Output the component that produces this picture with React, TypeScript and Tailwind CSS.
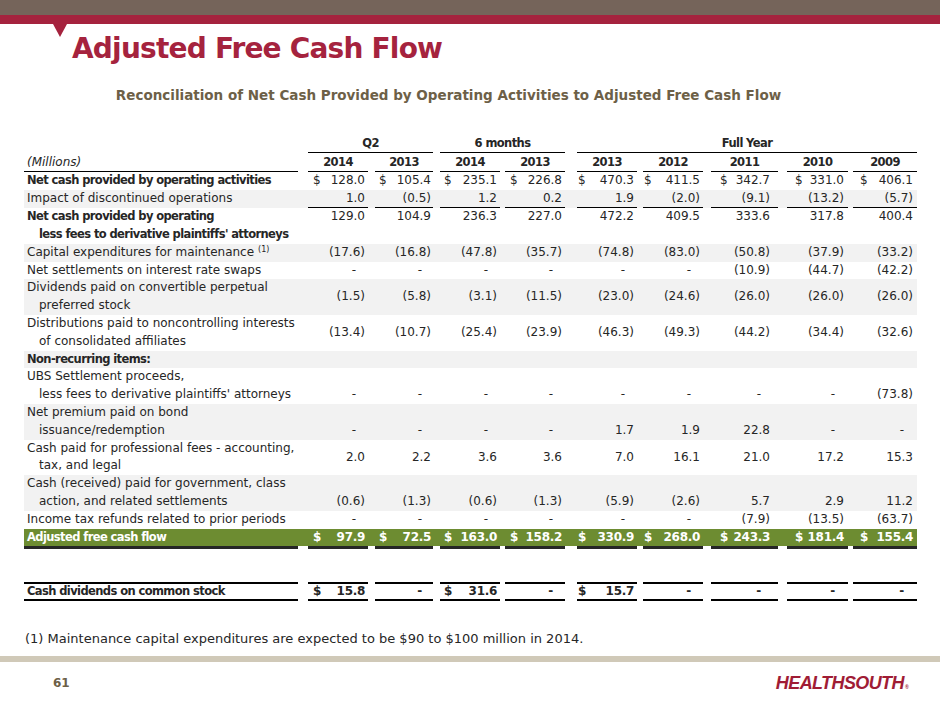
import React from "react";

type Align = "center" | "end";

type Line = {
  label: string[];
  vals?: string[];
  bold?: boolean;
  gray?: boolean;
  align?: Align;
  underline?: boolean;
  indent?: boolean;
  note?: boolean;
};

// column boxes line up with the underlines in the reference
const COLS = [
  { box: "ml-[10px] w-[60px]", pl: "pl-[5px]", pr: "pr-[3px]" },
  { box: "ml-[7px] w-[58px]", pl: "pl-[4px]", pr: "pr-[2px]" },
  { box: "ml-[7px] w-[60px]", pl: "pl-[4px]", pr: "pr-[3px]" },
  { box: "ml-[5px] w-[60px]", pl: "pl-[5px]", pr: "pr-[3px]" },
  { box: "ml-[12px] w-[60px]", pl: "pl-[1px]", pr: "pr-[3px]" },
  { box: "ml-[6px] w-[60px]", pl: "pl-[1px]", pr: "pr-[3px]" },
  { box: "ml-[8px] w-[67px]", pl: "pl-[9px]", pr: "pr-[8px]" },
  { box: "ml-[9px] w-[61px]", pl: "pl-[8px]", pr: "pr-[4px]" },
  { box: "ml-[5px] w-[64px]", pl: "pl-[7px]", pr: "pr-[4px]" },
];

const YEARS = ["2014", "2013", "2014", "2013", "2013", "2012", "2011", "2010", "2009"];

const ROWS: Line[] = [
  {
    label: ["Net cash provided by operating activities"],
    bold: true,
    vals: ["$128.0", "$105.4", "$235.1", "$226.8", "$470.3", "$411.5", "$342.7", "$331.0", "$406.1"],
  },
  {
    label: ["Impact of discontinued operations"],
    gray: true,
    underline: true,
    vals: ["1.0", "(0.5)", "1.2", "0.2", "1.9", "(2.0)", "(9.1)", "(13.2)", "(5.7)"],
  },
  {
    label: ["Net cash provided by operating"],
    bold: true,
    vals: ["129.0", "104.9", "236.3", "227.0", "472.2", "409.5", "333.6", "317.8", "400.4"],
  },
  { label: ["less fees to derivative plaintiffs' attorneys"], bold: true, indent: true },
  {
    label: ["Capital expenditures for maintenance"],
    note: true,
    gray: true,
    vals: ["(17.6)", "(16.8)", "(47.8)", "(35.7)", "(74.8)", "(83.0)", "(50.8)", "(37.9)", "(33.2)"],
  },
  {
    label: ["Net settlements on interest rate swaps"],
    vals: ["-", "-", "-", "-", "-", "-", "(10.9)", "(44.7)", "(42.2)"],
  },
  {
    label: ["Dividends paid on convertible perpetual", "preferred stock"],
    gray: true,
    vals: ["(1.5)", "(5.8)", "(3.1)", "(11.5)", "(23.0)", "(24.6)", "(26.0)", "(26.0)", "(26.0)"],
  },
  {
    label: ["Distributions paid to noncontrolling interests", "of consolidated affiliates"],
    vals: ["(13.4)", "(10.7)", "(25.4)", "(23.9)", "(46.3)", "(49.3)", "(44.2)", "(34.4)", "(32.6)"],
  },
  { label: ["Non-recurring items:"], bold: true, gray: true },
  {
    label: ["UBS Settlement proceeds,", "less fees to derivative plaintiffs' attorneys"],
    align: "end",
    vals: ["-", "-", "-", "-", "-", "-", "-", "-", "(73.8)"],
  },
  {
    label: ["Net premium paid on bond", "issuance/redemption"],
    gray: true,
    align: "end",
    vals: ["-", "-", "-", "-", "1.7", "1.9", "22.8", "-", "-"],
  },
  {
    label: ["Cash paid for professional fees - accounting,", "tax, and legal"],
    vals: ["2.0", "2.2", "3.6", "3.6", "7.0", "16.1", "21.0", "17.2", "15.3"],
  },
  {
    label: ["Cash (received) paid for government, class", "action, and related settlements"],
    gray: true,
    align: "end",
    vals: ["(0.6)", "(1.3)", "(0.6)", "(1.3)", "(5.9)", "(2.6)", "5.7", "2.9", "11.2"],
  },
  {
    label: ["Income tax refunds related to prior periods"],
    vals: ["-", "-", "-", "-", "-", "-", "(7.9)", "(13.5)", "(63.7)"],
  },
];

const ADJUSTED = ["$97.9", "$72.5", "$163.0", "$158.2", "$330.9", "$268.0", "$243.3", "$181.4", "$155.4"];
const DIVIDENDS = ["$15.8", "-", "$31.6", "-", "$15.7", "-", "-", "-", "-"];

const BOLD = "font-bold text-[11.5px] tracking-[-0.6px]";

function Value({ v, i, extra }: { v: string; i: number; extra?: string }) {
  const c = COLS[i];
  const dollar = v.startsWith("$");
  const num = dollar ? v.slice(1) : v;
  return (
    <div className={`${c.box} flex justify-between ${extra ?? ""}`}>
      <span className={c.pl}>{dollar ? "$" : ""}</span>
      <span className={`${c.pr} ${num === "-" ? "mr-[9px]" : ""}`}>{num}</span>
    </div>
  );
}

function Row({ r }: { r: Line }) {
  return (
    <div className={`flex leading-[17.8px] ${r.gray ? "bg-[#f2f2f2]" : ""}`}>
      <div
        className={`w-[274px] whitespace-nowrap ${r.indent ? "pl-[15px]" : "pl-[3px]"} ${
          r.bold ? BOLD : ""
        }`}
      >
        {r.label.map((t, k) => (
          <div key={k} className={`h-[17.8px] ${k > 0 ? "pl-[12px]" : ""}`}>
            {t}
            {r.note && (
              <sup className="text-[8px] leading-none ml-[4px]">(1)</sup>
            )}
          </div>
        ))}
      </div>
      {r.vals?.map((v, i) => (
        <Value
          key={i}
          v={v}
          i={i}
          extra={`${r.align === "end" ? "items-end" : "items-center"} ${
            r.underline ? "border-b border-black" : ""
          }`}
        />
      ))}
    </div>
  );
}

export default function App() {
  return (
    <div className="relative w-[940px] h-[705px] overflow-hidden bg-white flex flex-col font-['DejaVu_Sans',sans-serif] text-[#262626]">
      <div className="h-[15px] bg-[#75645a]" />
      <div className="h-[9px] bg-[#a5233e]" />
      <div className="absolute left-[53px] top-[24px] w-0 h-0 border-l-[7px] border-r-[7px] border-t-[13px] border-l-transparent border-r-transparent border-t-[#a5233e]" />

      <h1 className="ml-[72px] mt-[11px] h-[28px] leading-[28px] text-[28px] font-bold tracking-[-0.8px] text-[#a5233e]">
        Adjusted Free Cash Flow
      </h1>

      <p className="w-[897px] mt-[26px] text-center leading-[13px] text-[13.5px] font-bold text-[#6d6047]">
        Reconciliation of Net Cash Provided by Operating Activities to Adjusted Free Cash Flow
      </p>

      <div className="ml-[24px] mt-[32px] w-[893px] text-[12px]">
        {/* group headings */}
        <div className={`flex leading-[18px] ${BOLD}`}>
          <div className="w-[274px]" />
          <div className="ml-[10px] w-[125px] text-center border-b border-black">Q2</div>
          <div className="ml-[7px] w-[125px] text-center border-b border-black">6 months</div>
          <div className="ml-[12px] w-[340px] text-center border-b border-black">Full Year</div>
        </div>
        <div className="flex leading-[18px] h-[19px]">
          <div className="w-[274px] pl-[3px] italic border-b border-black">(Millions)</div>
          {YEARS.map((y, i) => (
            <div key={i} className={`${COLS[i].box} text-center border-b border-black ${BOLD}`}>
              {y}
            </div>
          ))}
        </div>

        {ROWS.map((r, k) => (
          <Row key={k} r={r} />
        ))}

        <div className="flex leading-[17px] h-[17px] bg-[#6d8c31] text-white font-bold">
          <div className={`w-[274px] pl-[3px] ${BOLD}`}>Adjusted free cash flow</div>
          {ADJUSTED.map((v, i) => (
            <Value key={i} v={v} i={i} extra="items-center tracking-[-0.3px]" />
          ))}
        </div>
        <div className="flex h-[3px]">
          <div className="w-[274px] bg-[#262626]" />
          {COLS.map((c, i) => (
            <div key={i} className={`${c.box} bg-[#262626]`} />
          ))}
        </div>

        <div className="flex mt-[33px] leading-[15px] font-bold">
          <div className={`w-[274px] pl-[3px] border-y-2 border-black ${BOLD}`}>
            Cash dividends on common stock
          </div>
          {DIVIDENDS.map((v, i) => (
            <Value key={i} v={v} i={i} extra="items-center border-y-2 border-black tracking-[-0.3px]" />
          ))}
        </div>
      </div>

      <p className="ml-[25px] mt-[29px] leading-[18px] text-[13px]">
        (1) Maintenance capital expenditures are expected to be $90 to $100 million in 2014.
      </p>

      <div className="mt-[8px] h-[6px] bg-[#d0c9b8]" />

      <div className="flex items-center justify-between h-[44px] pl-[53px] pr-[32px]">
        <span className="text-[12px] font-bold text-[#6d6047]">61</span>
        <span className="font-['Liberation_Sans',sans-serif] italic font-bold text-[18px] tracking-[-0.6px] text-[#a01c35]">
          HEALTHSOUTH
          <span className="text-[5px] align-baseline ml-[1px]">®</span>
        </span>
      </div>
    </div>
  );
}
